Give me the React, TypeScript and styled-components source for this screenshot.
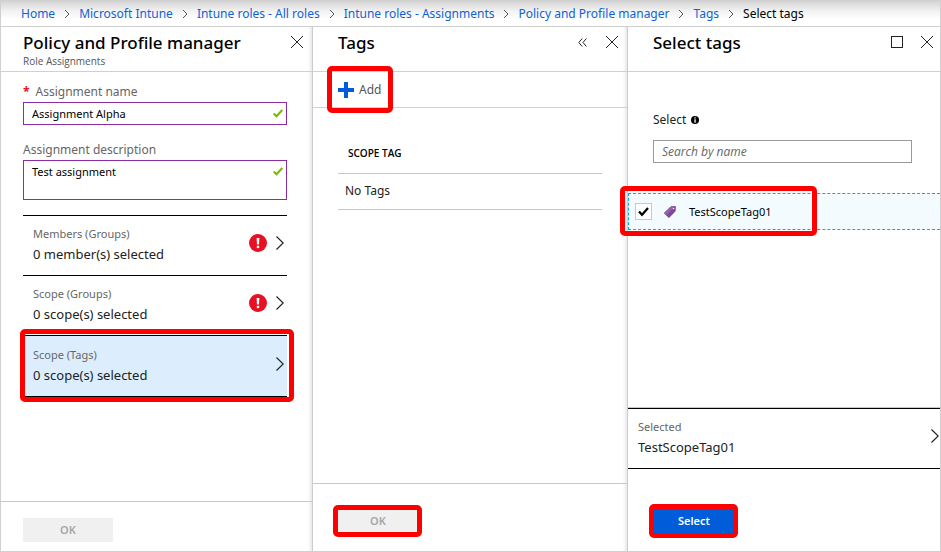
import React from "react";
import styled, { createGlobalStyle, css } from "styled-components";

const GlobalStyle = createGlobalStyle`
  *, *::before, *::after { box-sizing: border-box; }
  body {
    margin: 0;
    background: #fff;
    color: #000;
    font: 13px/20px "Noto Sans", "Open Sans", sans-serif;
  }
  button, input, textarea { font: inherit; color: inherit; margin: 0; }
  button { cursor: pointer; }
`;

const Page = styled.div`
  display: flex;
  flex-direction: column;
  min-height: 100vh;
  border: 1px solid #d0d0d0;
`;

const TopBar = styled.nav`
  height: 26px;
  border-bottom: 1px solid #d0d0d0;
  background: linear-gradient(#d4d4d4, #f2f2f2 10px, #fff 18px);
`;

const Crumbs = styled.ol`
  display: flex;
  align-items: center;
  height: 25px;
  margin: 0;
  padding: 0 0 0 20px;
  list-style: none;
  font-size: 12px;
  white-space: nowrap;
`;

const Crumb = styled.li`
  display: flex;
  align-items: center;

  svg { margin: 0 9px; }
`;

const CrumbLink = styled.a`
  color: #0f62d6;
  text-decoration: none;
`;

const Blades = styled.main`
  flex: 1;
  display: grid;
  grid-template-columns: 312fr 315fr 312fr;
`;

const Blade = styled.section<{ $last?: boolean }>`
  display: flex;
  flex-direction: column;
  min-width: 0;
  ${(p) =>
    !p.$last &&
    css`
      border-right: 1px solid #ccc;
      box-shadow: inset -5px 0 4px -4px #ddd;
    `}
`;

const BladeHeader = styled.header<{ $inset: number; $end: number }>`
  display: flex;
  justify-content: space-between;
  height: 45px;
  padding: 4px ${(p) => p.$end}px 0 ${(p) => p.$inset}px;
  border-bottom: 1px solid #d0d0d0;
`;

const Title = styled.h2`
  margin: 0;
  font-size: 17px;
  line-height: 24px;
  font-weight: 500;
`;

const Subtitle = styled.p`
  margin: 0;
  font-family: "Open Sans", sans-serif;
  font-size: 10px;
  line-height: 12px;
  color: #555;
`;

const Tools = styled.div`
  display: flex;
  gap: 10px;
  height: 22px;
`;

const ToolButton = styled.button`
  display: grid;
  place-items: center;
  width: 20px;
  height: 22px;
  padding: 0;
  border: 0;
  background: none;
`;

const Form = styled.form`
  flex: 1;
  padding: 10px 25px 0 22px;
`;

const Label = styled.label`
  display: block;
  font-size: 12px;
  line-height: 20px;
  color: #666;
`;

const Required = styled.span`
  margin-right: 6px;
  color: #e81123;
  font-weight: 700;
`;

const Field = styled.div`
  position: relative;
  display: flex;
  margin-bottom: 15px;
`;

const textBox = css`
  display: block;
  width: 100%;
  border: 1px solid #8a2da5;
  padding: 0 24px 0 8px;
  background: #fff;
  font-size: 11px;
  outline: 0;
`;

const TextInput = styled.input`
  ${textBox}
  height: 23px;
`;

const TextArea = styled.textarea`
  ${textBox}
  height: 40px;
  padding-top: 1px;
  resize: none;
  overflow: hidden;
`;

const Valid = styled.span`
  position: absolute;
  top: 7px;
  right: 4px;
  display: flex;
`;

const Pickers = styled.div`
  border-bottom: 1px solid #000;
`;

const Picker = styled.button<{ $active?: boolean }>`
  display: flex;
  align-items: center;
  width: 100%;
  height: ${(p) => (p.$active ? 61 : 60)}px;
  padding: 0 3px ${(p) => (p.$active ? 2 : 4)}px 10px;
  border: 0;
  border-top: 1px solid #000;
  background: ${(p) => (p.$active ? "#dceefe" : "#fff")};
  text-align: left;
`;

const PickerText = styled.span`
  flex: 1;
  display: grid;
`;

const PickerLabel = styled.span`
  font-size: 11px;
  line-height: 20px;
  color: #666;
`;

const PickerValue = styled.span`
  font-size: 13px;
  line-height: 20px;
  color: #222;
`;

const PickerIcons = styled.span`
  display: flex;
  align-items: center;
  gap: 9px;
  padding-bottom: 2px;
`;

const Marked = styled.div`
  position: relative;
`;

const Marker = styled.span<{ $inset: string }>`
  position: absolute;
  inset: ${(p) => p.$inset};
  border: 5px solid #f00;
  border-radius: 5px;
  pointer-events: none;
  z-index: 1;
`;

const Footer = styled.footer<{ $pad: string }>`
  display: flex;
  padding: ${(p) => p.$pad};
  border-top: 1px solid #c8c8c8;
`;

const ActionButton = styled.button<{ $primary?: boolean; $wide?: boolean }>`
  display: block;
  width: ${(p) => (p.$wide ? 90 : 80)}px;
  height: 24px;
  padding: 0;
  border: 0;
  background: ${(p) => (p.$primary ? "#015cda" : "#f0f0f0")};
  color: ${(p) => (p.$primary ? "#fff" : "#a6a6a6")};
  font-size: 11px;
  line-height: 24px;
  font-weight: 600;
`;

const CommandBar = styled.div`
  display: flex;
  align-items: center;
  height: 36px;
  padding-left: 25px;
  border-bottom: 1px solid #d0d0d0;
`;

const Command = styled.button`
  display: flex;
  align-items: center;
  gap: 5px;
  padding: 0;
  border: 0;
  background: none;
  color: #555;
  font-size: 12px;
`;

const TableArea = styled.div`
  flex: 1;
  padding: 26px 25px 0;
`;

const TagTable = styled.table`
  width: 100%;
  border-collapse: collapse;
  text-align: left;
`;

const HeadCell = styled.th`
  height: 39px;
  padding: 0 10px;
  border-bottom: 1px solid #c8c8c8;
  font-family: "Open Sans", sans-serif;
  font-size: 10px;
  font-weight: 600;
`;

const Cell = styled.td`
  height: 36px;
  padding: 0 7px;
  border-bottom: 1px solid #c8c8c8;
  font-size: 12px;
  color: #222;
`;

const SearchArea = styled.div`
  padding: 38px 28px 30px 25px;
`;

const SearchLabel = styled.label`
  display: flex;
  align-items: center;
  gap: 5px;
  margin-bottom: 10px;
  font-size: 12px;
  line-height: 20px;
  color: #222;
`;

const SearchInput = styled.input`
  display: block;
  width: 100%;
  height: 23px;
  padding: 0 8px;
  border: 1px solid #999;
  font-family: "Open Sans", sans-serif;
  font-size: 12px;
  outline: 0;

  &::placeholder { color: #666; font-style: italic; opacity: 1; }
`;

const Option = styled.label`
  display: flex;
  align-items: center;
  height: 37px;
  padding-left: 6px;
  border: 1px dashed #00aeea;
  border-right: 0;
  background: #f3fbfe;
  font-size: 11px;
`;

const CheckBox = styled.input`
  appearance: none;
  width: 17px;
  height: 17px;
  margin: 0;
  border: 1px solid #c8c8c8;
  background: #fff;
`;

const CheckHolder = styled.span`
  position: relative;
  display: flex;
  margin-right: 12px;

  svg {
    position: absolute;
    top: 3px;
    left: 3px;
    pointer-events: none;
  }

  input:not(:checked) + svg { display: none; }
`;

const OptionName = styled.span`
  margin-left: 13px;
`;

const Spacer = styled.div`
  flex: 1;
`;

const Selected = styled.div`
  border-top: 1px solid #c8c8c8;
  border-bottom: 1px solid #000;

  ${Picker} { padding-right: 1px; }
`;

const FinalFooter = styled.footer`
  display: flex;
  padding: 40px 26px 18px;
`;

const CrumbArrow = () => (
  <svg width="6" height="10" viewBox="0 0 6 10" fill="none" stroke="#555" aria-hidden="true">
    <path d="M1 1l4 4-4 4" />
  </svg>
);

const Close = () => (
  <svg width="12" height="12" viewBox="0 0 12 12" stroke="#222" aria-hidden="true">
    <path d="M0 0l12 12M12 0L0 12" />
  </svg>
);

const Collapse = () => (
  <svg width="9" height="9" viewBox="0 0 9 9" fill="none" stroke="#222" aria-hidden="true">
    <path d="M4.200.500L.800 4.500l3.400 4M8.400.500L5 4.500l3.400 4" />
  </svg>
);

const Maximize = () => (
  <svg width="12" height="12" viewBox="0 0 12 12" fill="none" stroke="#222" aria-hidden="true">
    <rect x=".5" y=".5" width="11" height="11" />
  </svg>
);

const Tick = () => (
  <svg width="10" height="9" viewBox="0 0 10 9" fill="none" stroke="#76b900" strokeWidth="2" aria-hidden="true">
    <path d="M.700 4.500l2.800 2.800L9.300 1" />
  </svg>
);

const BlackTick = () => (
  <svg width="11" height="11" viewBox="0 0 11 11" fill="none" stroke="#000" strokeWidth="2.200" aria-hidden="true">
    <path d="M1 5.500l3 3.300L10 2" />
  </svg>
);

const Chevron = () => (
  <svg width="8" height="14" viewBox="0 0 8 14" fill="none" stroke="#222" strokeWidth="1.200" aria-hidden="true">
    <path d="M.500.500L7.200 7 .500 13.500" />
  </svg>
);

const ErrorMark = () => (
  <svg width="18" height="18" viewBox="0 0 18 18" role="img" aria-label="Required">
    <circle cx="9" cy="9" r="9" fill="#e81123" />
    <path d="M7.600 4h2.800l-.4 6.500H8z" fill="#fff" />
    <rect x="7.800" y="11.800" width="2.400" height="2.300" fill="#fff" />
  </svg>
);

const Plus = () => (
  <svg width="16" height="16" viewBox="0 0 16 16" fill="#015cda" aria-hidden="true">
    <path d="M6 0h4v6h6v4h-6v6H6v-6H0V6h6z" />
  </svg>
);

const Info = () => (
  <svg width="8" height="8" viewBox="0 0 8 8" aria-hidden="true">
    <circle cx="4" cy="4" r="4" />
    <path d="M3.400 1.300h1.300v1.200H3.400zM3.400 3.200h1.300v3.500H3.400z" fill="#fff" />
  </svg>
);

const TagIcon = () => (
  <svg width="12" height="12" viewBox="0 0 12 12" aria-hidden="true">
    <path d="M6.500.700Q7 .3 7.600.3L11 .1q.9 0 .9.900L11.700 4.600q0 .5-.4.900L5.500 11.500q-.6.500-1.200 0L.5 7.800q-.5-.6 0-1.200z" fill="#804998" />
    <path d="M6.500.700Q7 .3 7.600.3L11 .1l-8.600 9.500L.5 7.800q-.5-.6 0-1.200z" fill="#9562aa" />
    <circle cx="9.500" cy="2.500" r=".8" fill="#fff" />
  </svg>
);

const trail = [
  "Home",
  "Microsoft Intune",
  "Intune roles - All roles",
  "Intune roles - Assignments",
  "Policy and Profile manager",
  "Tags",
];

type PickerRowProps = { label: string; value: string; error?: boolean; active?: boolean };

const PickerRow = ({ label, value, error, active }: PickerRowProps) => (
  <Picker type="button" $active={active}>
    <PickerText>
      <PickerLabel>{label}</PickerLabel>
      <PickerValue>{value}</PickerValue>
    </PickerText>
    <PickerIcons>
      {error && <ErrorMark />}
      <Chevron />
    </PickerIcons>
  </Picker>
);

export default function App() {
  return (
    <>
      <GlobalStyle />
      <Page>
        <TopBar aria-label="Breadcrumb">
          <Crumbs>
            {trail.map((name) => (
              <Crumb key={name}>
                <CrumbLink href="#">{name}</CrumbLink>
                <CrumbArrow />
              </Crumb>
            ))}
            <Crumb aria-current="page">Select tags</Crumb>
          </Crumbs>
        </TopBar>
        <Blades>
          <Blade>
            <BladeHeader $inset={22} $end={5}>
              <div>
                <Title>Policy and Profile manager</Title>
                <Subtitle>Role Assignments</Subtitle>
              </div>
              <Tools>
                <ToolButton aria-label="Close"><Close /></ToolButton>
              </Tools>
            </BladeHeader>
            <Form>
              <Label htmlFor="name"><Required>*</Required>Assignment name</Label>
              <Field>
                <TextInput id="name" defaultValue="Assignment Alpha" />
                <Valid><Tick /></Valid>
              </Field>
              <Label htmlFor="description">Assignment description</Label>
              <Field>
                <TextArea id="description" defaultValue="Test assignment" />
                <Valid><Tick /></Valid>
              </Field>
              <Pickers>
                <PickerRow label="Members (Groups)" value="0 member(s) selected" error />
                <PickerRow label="Scope (Groups)" value="0 scope(s) selected" error />
                <Marked>
                  <PickerRow label="Scope (Tags)" value="0 scope(s) selected" active />
                  <Marker $inset="-6px -7px -6px -3px" />
                </Marked>
              </Pickers>
            </Form>
            <Footer $pad="16px 22px 9px">
              <ActionButton $wide disabled>OK</ActionButton>
            </Footer>
          </Blade>
          <Blade>
            <BladeHeader $inset={25} $end={5}>
              <Title>Tags</Title>
              <Tools>
                <ToolButton aria-label="Collapse"><Collapse /></ToolButton>
                <ToolButton aria-label="Close"><Close /></ToolButton>
              </Tools>
            </BladeHeader>
            <CommandBar>
              <Marked>
                <Command type="button"><Plus />Add</Command>
                <Marker $inset="-14px -12px -13px -11px" />
              </Marked>
            </CommandBar>
            <TableArea>
              <TagTable>
                <thead><tr><HeadCell scope="col">SCOPE TAG</HeadCell></tr></thead>
                <tbody><tr><Cell>No Tags</Cell></tr></tbody>
              </TagTable>
            </TableArea>
            <Footer $pad="25px 25px 18px">
              <Marked>
                <ActionButton disabled>OK</ActionButton>
                <Marker $inset="-4px -4px -4px -5px" />
              </Marked>
            </Footer>
          </Blade>
          <Blade $last>
            <BladeHeader $inset={25} $end={3}>
              <Title>Select tags</Title>
              <Tools>
                <ToolButton aria-label="Maximize"><Maximize /></ToolButton>
                <ToolButton aria-label="Close"><Close /></ToolButton>
              </Tools>
            </BladeHeader>
            <SearchArea>
              <SearchLabel htmlFor="search">Select <Info /></SearchLabel>
              <SearchInput id="search" placeholder="Search by name" />
            </SearchArea>
            <Marked>
              <Option>
                <CheckHolder>
                  <CheckBox type="checkbox" defaultChecked />
                  <BlackTick />
                </CheckHolder>
                <TagIcon />
                <OptionName>TestScopeTag01</OptionName>
              </Option>
              <Marker $inset="-7px 123px -6px -8px" />
            </Marked>
            <Spacer />
            <Selected>
              <PickerRow label="Selected" value="TestScopeTag01" />
            </Selected>
            <FinalFooter>
              <Marked>
                <ActionButton $primary>Select</ActionButton>
                <Marker $inset="-5px -4px -5px -5px" />
              </Marked>
            </FinalFooter>
          </Blade>
        </Blades>
      </Page>
    </>
  );
}
